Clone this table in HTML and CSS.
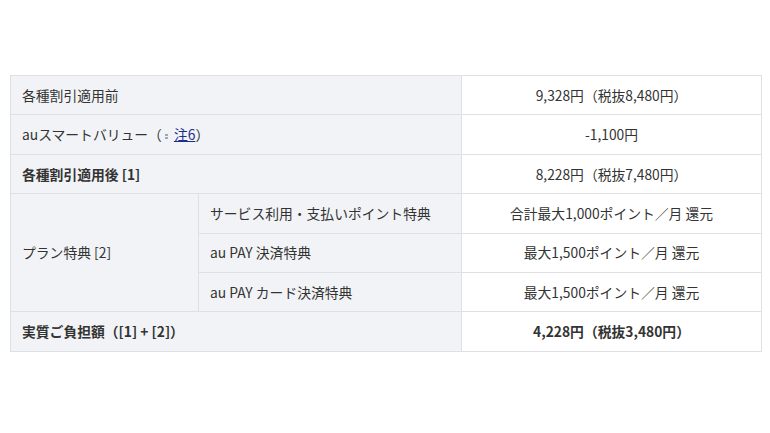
FILE: index.html
```html
<!DOCTYPE html>
<html lang="ja">
<head>
<meta charset="utf-8">
<link rel="stylesheet" href="styles.css">
</head>
<body>
<div class="wrap">
<table class="price">
  <colgroup><col class="c1"><col class="c2"><col class="c3"></colgroup>
  <tr><th colspan="2">各種割引適用前</th><td>9,328円（税抜8,480円）</td></tr>
  <tr><th colspan="2">auスマートバリュー（<svg class="ico" width="5" height="7" viewBox="0 0 5 7"><path d="M1 2h3M1 5h3" stroke="#4a5a8a" stroke-width="1"/></svg><a href="#">注6</a>）</th><td>-1,100円</td></tr>
  <tr><th colspan="2" class="b">各種割引適用後 [1]</th><td>8,228円（税抜7,480円）</td></tr>
  <tr><th rowspan="3">プラン特典 [2]</th><th>サービス利用・支払いポイント特典</th><td>合計最大1,000ポイント／月 還元</td></tr>
  <tr><th>au PAY 決済特典</th><td>最大1,500ポイント／月 還元</td></tr>
  <tr><th>au PAY カード決済特典</th><td>最大1,500ポイント／月 還元</td></tr>
  <tr><th colspan="2" class="b">実質ご負担額（[1] + [2]）</th><td class="b">4,228円（税抜3,480円）</td></tr>
</table>
</div>
</body>
</html>
```
FILE: styles.css
```css
html, body { margin: 0; padding: 0; background: #fff; }
body { font-family: "Noto Sans CJK JP", "Noto Sans", sans-serif; color: #333; font-size: 13.8px; }
.wrap { padding: 75px 9px 0 10px; }
.price { border-collapse: collapse; width: 751px; table-layout: fixed; }
.c1 { width: 188px; }
.c2 { width: 263px; }
.c3 { width: 300px; }
.price th, .price td { border: 1px solid #dfe0e4; height: 39.4px; padding: 0 11px; box-sizing: border-box; line-height: 1.2; }
.price th { background: #f2f3f6; font-weight: normal; text-align: left; }
.price td { background: #fff; text-align: center; }
.price .b { font-weight: bold; }
.ico { display: inline-block; vertical-align: middle; margin: 0 5px 0 2px; }
.price a { color: #1a2f8c; text-decoration: underline; }
```
